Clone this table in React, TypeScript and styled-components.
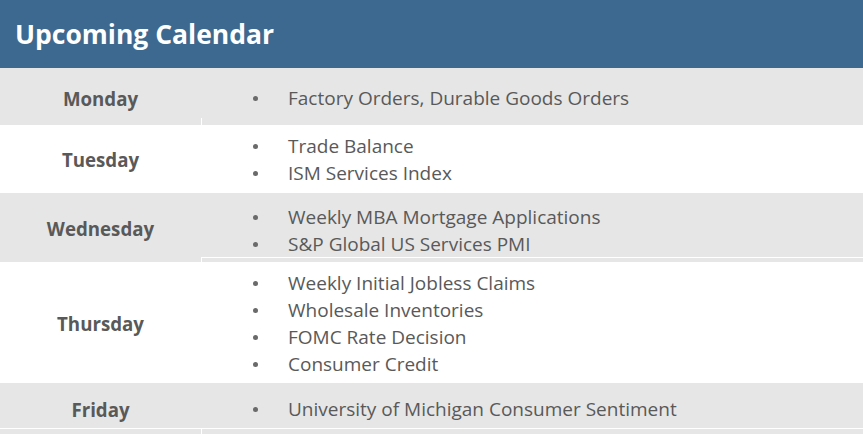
import React from "react";
import styled, { createGlobalStyle } from "styled-components";

const Global = createGlobalStyle`
  html, body { margin: 0; padding: 0; background: #ffffff; }
  body { font-family: "Open Sans", Lato, sans-serif; }
`;

const Page = styled.div`
  width: 863px;
  height: 434px;
  overflow: hidden;
  display: flex;
  flex-direction: column;
  background: #ffffff;
`;

const Header = styled.div`
  height: 68px;
  flex: none;
  background: #3d6990;
  display: flex;
  align-items: center;
  padding-left: 15px;
  padding-bottom: 1px;
  box-sizing: border-box;
`;

const Title = styled.h1`
  margin: 0;
  color: #ffffff;
  font-family: "Open Sans", sans-serif;
  font-weight: 700;
  font-size: 26.5px;
`;

const Row = styled.div<{ $h: number; $shade: boolean; $topLine?: boolean }>`
  flex: none;
  height: ${(p) => p.$h}px;
  display: grid;
  grid-template-columns: 201px 1fr;
  background: ${(p) => (p.$shade ? "#e6e6e6" : "#ffffff")};
  border-top: ${(p) => (p.$topLine ? "1px solid #ffffff" : "none")};
`;

const DayCell = styled.div<{ $offset: number }>`
  display: flex;
  align-items: center;
  justify-content: center;
  padding-top: ${(p) => p.$offset}px;
  font-weight: 700;
  font-size: 18.7px;
  color: #595959;
`;

const ItemsCell = styled.div`
  display: flex;
  flex-direction: column;
  min-height: 0;
`;

const ItemList = styled.ul<{ $offset: number }>`
  flex: 1;
  margin: 0;
  padding: ${(p) => p.$offset}px 0 0 0;
  list-style: none;
  display: flex;
  flex-direction: column;
  justify-content: center;
`;

const Item = styled.li`
  display: flex;
  align-items: center;
  height: 27px;
  font-size: 19px;
  color: #595959;
  white-space: nowrap;
`;

const Bullet = styled.span`
  flex: none;
  width: 5px;
  height: 5px;
  border-radius: 50%;
  background: #6a6a6a;
  margin: 1px 30px 0 52px;
`;

const Tail = styled.div<{ $h: number; $top: boolean }>`
  flex: none;
  height: ${(p) => p.$h}px;
  box-sizing: border-box;
  border-left: 1px solid #ffffff;
  border-top: ${(p) => (p.$top ? "1px solid #ffffff" : "none")};
`;

type Day = {
  day: string;
  items: string[];
  h: number;
  shade: boolean;
  offset: number;
  tail?: { h: number; top: boolean };
};

const days: Day[] = [
  { day: "Monday", items: ["Factory Orders, Durable Goods Orders"], h: 57, shade: true, offset: 3, tail: { h: 7, top: false } },
  { day: "Tuesday", items: ["Trade Balance", "ISM Services Index"], h: 68, shade: false, offset: 1 },
  { day: "Wednesday", items: ["Weekly MBA Mortgage Applications", "S&P Global US Services PMI"], h: 69, shade: true, offset: 2, tail: { h: 8, top: true } },
  {
    day: "Thursday",
    items: ["Weekly Initial Jobless Claims", "Wholesale Inventories", "FOMC Rate Decision", "Consumer Credit"],
    h: 121,
    shade: false,
    offset: 1,
  },
  { day: "Friday", items: ["University of Michigan Consumer Sentiment"], h: 45, shade: true, offset: 7 },
];

export default function App() {
  return (
    <Page>
      <Global />
      <Header>
        <Title>Upcoming Calendar</Title>
      </Header>
      {days.map((d) => (
        <Row key={d.day} $h={d.h} $shade={d.shade}>
          <DayCell $offset={d.offset}>{d.day}</DayCell>
          <ItemsCell>
            <ItemList $offset={d.tail ? d.offset + d.tail.h : d.offset}>
              {d.items.map((it) => (
                <Item key={it}>
                  <Bullet />
                  {it}
                </Item>
              ))}
            </ItemList>
            {d.tail && <Tail $h={d.tail.h} $top={d.tail.top} />}
          </ItemsCell>
        </Row>
      ))}
      <Row $h={20} $shade={true} $topLine>
        <div />
        <Tail $h={20} $top={false} />
      </Row>
    </Page>
  );
}
